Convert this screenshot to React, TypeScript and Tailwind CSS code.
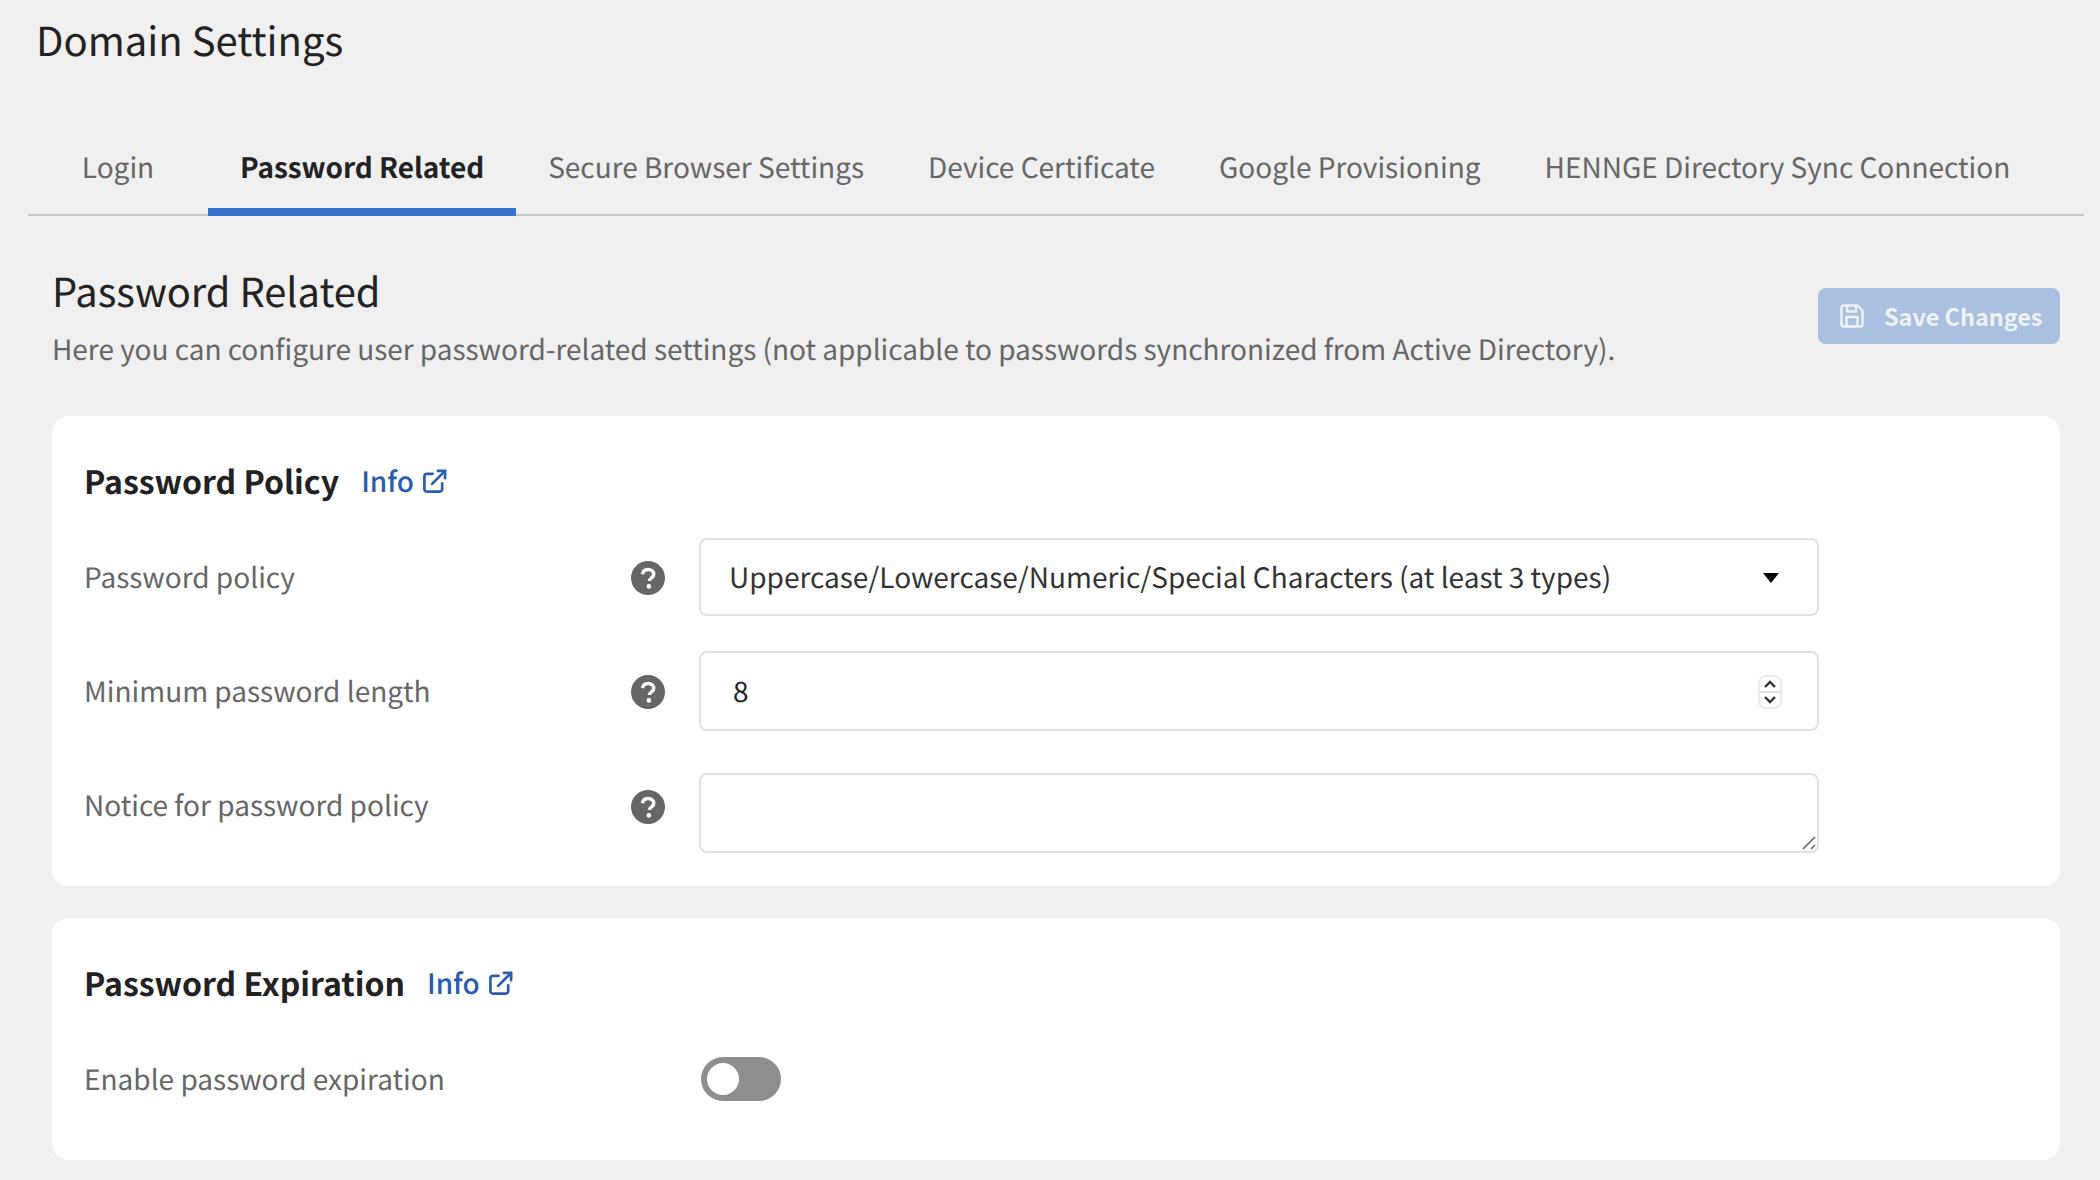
import React from "react";

const font = { fontFamily: '"Noto Sans CJK JP", "Noto Sans", sans-serif' };

function ExternalIcon() {
  return (
    <svg width="25" height="25" viewBox="0 0 26 26" fill="none" stroke="#2a5db0" strokeWidth="2.800" strokeLinecap="round" strokeLinejoin="round">
      <path d="M11 5H5a2.500 2.500 0 0 0-2.500 2.500V21A2.500 2.500 0 0 0 5 23.500h13.500A2.500 2.500 0 0 0 21 21v-6" />
      <path d="M16.500 2H24v7.500" />
      <path d="M24 2 10.500 15.500" />
    </svg>
  );
}

function HelpIcon() {
  return (
    <svg width="34" height="34" viewBox="0 0 34 34" className="shrink-0">
      <circle cx="17" cy="17" r="17" fill="#666666" />
      <path d="M11.500 13.200c.4-3 2.700-4.700 5.700-4.700 3.200 0 5.500 1.900 5.500 4.600 0 2.100-1.200 3.300-2.700 4.300-1.300.9-1.700 1.400-1.700 2.700" fill="none" stroke="#ffffff" strokeWidth="3.400" />
      <circle cx="17.900" cy="25.400" r="2.300" fill="#ffffff" />
    </svg>
  );
}

function Row({ label, children, control, labelClass }: { label: string; children?: React.ReactNode; control: string; labelClass: string }) {
  return (
    <div className="flex items-start">
      <div className={labelClass}>{label}</div>
      <div className="w-[85px] h-[78px] pt-[2px] flex items-center shrink-0 pl-[17px]"><HelpIcon /></div>
      <div className={control}>{children}</div>
    </div>
  );
}

function Tab({ label, active }: { label: string; active?: boolean }) {
  return (
    <div
      className={
        active
          ? "min-w-[180px] px-[32px] h-[85px] flex items-center justify-center whitespace-nowrap border-b-[8px] border-[#3771cc] font-bold text-[28px] tracking-[-0.05px] text-[#222222] pb-[5px]"
          : "min-w-[180px] px-[32px] h-[85px] flex items-center justify-center whitespace-nowrap text-[28px] text-[#666666] pb-[13px]"
      }
    >
      {label}
    </div>
  );
}

export default function App() {
  return (
    <div style={font} className="w-[2100px] h-[1180px] overflow-hidden bg-[#f0f0f0] pl-[28px] pr-[16px] [text-rendering:geometricPrecision]">
      <div className="h-[131px] pl-[8px] pt-[13px] text-[40px] leading-[52px] text-[#222222]">Domain Settings</div>

      <div className="flex border-b-[2px] border-[#c8c8c8] h-[85px] box-border">
        <Tab label="Login" />
        <Tab label="Password Related" active />
        <Tab label="Secure Browser Settings" />
        <Tab label="Device Certificate" />
        <Tab label="Google Provisioning" />
        <Tab label="HENNGE Directory Sync Connection" />
      </div>

      <div className="px-[24px]">
        <div className="flex justify-between items-start pt-[48px] h-[200px]">
          <div>
            <div className="text-[39.8px] leading-[54px] text-[#222222]">Password Related</div>
            <div className="text-[28px] leading-[40px] mt-[11px] tracking-[-0.02px] text-[#666666]">
              Here you can configure user password-related settings (not applicable to passwords synchronized from Active Directory).
            </div>
          </div>
          <button className="mt-[24px] w-[242px] h-[56px] rounded-[8px] bg-[#aac0e0] text-[#f0f4fa] flex items-center pl-[22px] gap-[20px] text-[23.4px] font-semibold shrink-0">
            <svg width="24" height="24" viewBox="0 0 24 24" fill="none" stroke="#f0f4fa" strokeWidth="2.400" strokeLinejoin="round">
              <path d="M3.500 1.500h14L22.500 6.500v14a2 2 0 0 1-2 2h-17a2 2 0 0 1-2-2v-17a2 2 0 0 1 2-2z" />
              <path d="M7 1.500v6h9v-6" />
              <path d="M6.500 22.500v-9.500h11v9.500" />
            </svg>
            <span className="pt-[2px]">Save Changes</span>
          </button>
        </div>

        <div className="bg-white rounded-[16px] h-[470px] px-[32px] pt-[40px]">
          <div className="flex items-center h-[44px] gap-[22px] mt-[3px]">
            <div className="text-[32px] leading-[44px] font-bold text-[#222222]">Password Policy</div>
            <div className="flex items-center gap-[8px] text-[28px] font-medium text-[#2a5db0]">
              Info <ExternalIcon />
            </div>
          </div>
          <div className="mt-[35px] flex flex-col gap-[36px]">
            <Row
              label="Password policy"
              labelClass="w-[530px] h-[78px] pb-[1px] flex items-center text-[28px] leading-[40px] text-[#666666] shrink-0"
              control="w-[1120px] h-[78px] border-[2px] border-[#e0e0e0] rounded-[8px] flex items-center justify-between pl-[28px] pr-[38px] text-[28px] text-[#333333]"
            >
              <span>Uppercase/Lowercase/Numeric/Special Characters (at least 3 types)</span>
              <svg className="mt-[2px]" width="16" height="10" viewBox="0 0 16 10"><path d="M0 0h16L8 10z" fill="#000000" /></svg>
            </Row>
            <Row
              label="Minimum password length"
              labelClass="w-[530px] h-[78px] pb-[1px] flex items-center text-[28px] leading-[40px] text-[#666666] shrink-0"
              control="-mt-[1px] w-[1120px] h-[80px] border-[2px] border-[#e0e0e0] rounded-[8px] flex items-center justify-between pl-[32px] pr-[35px] text-[28px] text-[#222222]"
            >
              <span>8</span>
              <svg className="mt-[1px]" width="24" height="34" viewBox="0 0 24 34" fill="none">
                <rect x="0.750" y="0.750" width="22.500" height="32.500" rx="8" fill="#ffffff" stroke="#e6e6e6" strokeWidth="1.500" />
                <path d="M0.750 17h22.500" stroke="#dddddd" strokeWidth="1.500" />
                <path d="M7 12l5-5 5 5" stroke="#333333" strokeWidth="2.400" />
                <path d="M7 22l5 5 5-5" stroke="#333333" strokeWidth="2.400" />
              </svg>
            </Row>
            <Row
              label="Notice for password policy"
              labelClass="w-[530px] h-[78px] pb-[3px] flex items-center text-[28px] leading-[40px] text-[#666666] shrink-0"
              control="mt-[6px] w-[1120px] h-[80px] border-[2px] border-[#e0e0e0] rounded-[8px] flex items-end justify-end"
            >
              <svg width="16" height="16" viewBox="0 0 16 16" stroke="#666666" strokeWidth="1.600"><path d="M2 14 14 2M10 14l4-4" /></svg>
            </Row>
          </div>
        </div>

        <div className="bg-white rounded-[16px] h-[242px] mt-[32px] px-[32px] pt-[40px]">
          <div className="flex items-center h-[44px] gap-[22px] mt-[3px]">
            <div className="text-[32px] leading-[44px] font-bold text-[#222222]">Password Expiration</div>
            <div className="flex items-center gap-[8px] text-[28px] font-medium text-[#2a5db0]">
              Info <ExternalIcon />
            </div>
          </div>
          <div className="flex items-center mt-[52px] h-[44px]">
            <div className="w-[617px] text-[28px] leading-[40px] text-[#666666]">Enable password expiration</div>
            <div className="w-[80px] h-[44px] rounded-full bg-[#8e8e8e] flex items-center pl-[6px]">
              <div className="w-[32px] h-[32px] rounded-full bg-white" />
            </div>
          </div>
        </div>
      </div>
    </div>
  );
}
